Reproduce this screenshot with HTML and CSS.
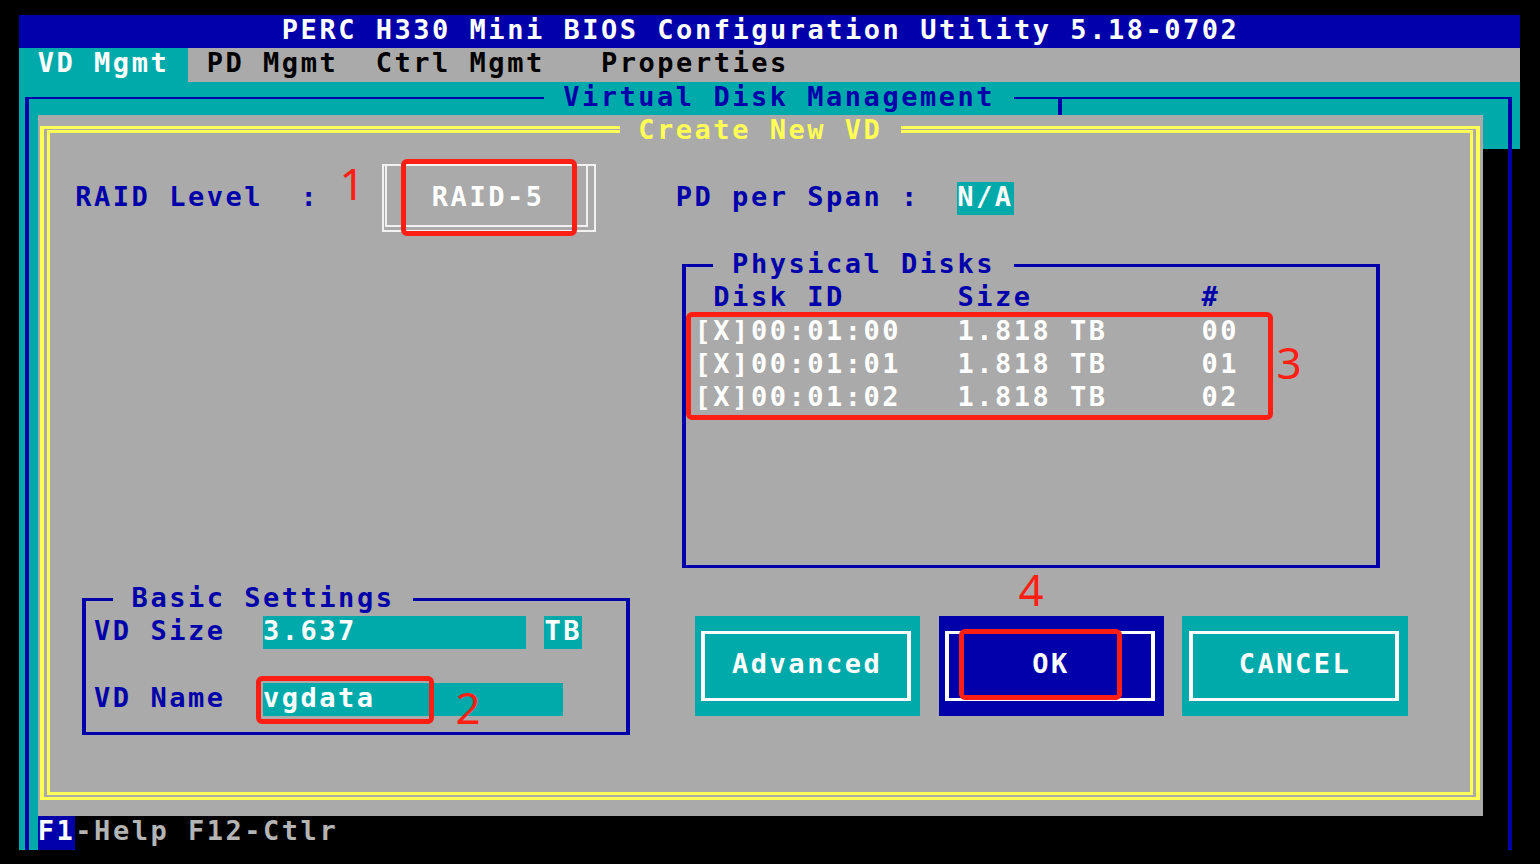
FILE: index.html
```html
<!DOCTYPE html>
<html lang="en">
<head>
<meta charset="utf-8">
<title>PERC H330 Mini BIOS Configuration Utility</title>
<link rel="stylesheet" href="styles.css">
</head>
<body>
<div class="screen">
  <div class="titlebar">PERC H330 Mini BIOS Configuration Utility 5.18-0702</div>
  <div class="menubar"><span class="menu-on"> VD Mgmt </span><span> PD Mgmt  Ctrl Mgmt   Properties</span></div>
  <div class="desk"></div>
  <div class="shadow"></div>
  <div class="statusbar"><span class="key">F1</span><span class="hint">-Help F12-Ctlr</span></div>
  <div class="vdm-frame"></div>
  <div class="vdm-title"> Virtual Disk Management </div>
  <div class="vdm-tee"></div>

  <div class="window">
    <div class="dframe"><div class="dframe-inner"></div></div>
    <div class="win-title"> Create New VD </div>

    <div class="lbl raid-lbl">RAID Level  :</div>
    <div class="sel"><div class="sel-inner"></div></div>
    <div class="val raid-val">RAID-5</div>

    <div class="lbl span-lbl">PD per Span :</div>
    <div class="field na">N/A</div>

    <div class="sbox pd-box"></div>
    <div class="legend pd-legend"> Physical Disks </div>
    <div class="lbl pd-head">Disk ID      Size         #</div>
    <div class="val pd-row r1">[X]00:01:00   1.818 TB     00</div>
    <div class="val pd-row r2">[X]00:01:01   1.818 TB     01</div>
    <div class="val pd-row r3">[X]00:01:02   1.818 TB     02</div>

    <div class="sbox bs-box"></div>
    <div class="legend bs-legend"> Basic Settings </div>
    <div class="lbl size-lbl">VD Size</div>
    <div class="field size-field">3.637</div>
    <div class="field tb-field">TB</div>
    <div class="lbl name-lbl">VD Name</div>
    <div class="field name-field">vgdata</div>

    <div class="btn btn-adv"><div class="btn-frame"></div><div class="btn-label">Advanced</div></div>
    <div class="btn btn-ok"><div class="btn-frame"></div><div class="btn-label">OK</div></div>
    <div class="btn btn-cancel"><div class="btn-frame"></div><div class="btn-label">CANCEL</div></div>
  </div>
</div>

<div class="mark m1"></div>
<div class="mark m2"></div>
<div class="mark m3"></div>
<div class="mark m4"></div>
<div class="num n1">1</div>
<div class="num n2">2</div>
<div class="num n3">3</div>
<div class="num n4">4</div>
</body>
</html>
```
FILE: styles.css
```css
:root {
  --cw: 18.775px;
  --rh: 33.4px;
  --blue: #0000AA;
  --cyan: #00AAAA;
  --gray: #AAAAAA;
  --yellow: #FFFF55;
  --white: #FFFFFF;
  --red: #FF1E14;
}

html, body {
  margin: 0;
  padding: 0;
}

body {
  background: #000;
  width: 1540px;
  height: 864px;
  overflow: hidden;
  position: relative;
}

.screen {
  margin: 15px 0 0 19px;
  display: grid;
  grid-template-columns: repeat(80, var(--cw));
  grid-template-rows: repeat(25, var(--rh));
  font-family: "DejaVu Sans Mono", monospace;
  font-weight: bold;
  font-size: 27px;
  line-height: 30.3px;
  letter-spacing: 2.519px;
  white-space: pre;
}

.titlebar {
  grid-row: 1;
  grid-column: 1 / -1;
  background: var(--blue);
  color: var(--white);
  padding-left: calc(var(--cw) * 14);
}

.menubar {
  grid-row: 2;
  grid-column: 1 / -1;
  background: var(--gray);
  color: #000;
  display: flex;
}

.menu-on {
  background: var(--cyan);
  color: var(--white);
}

.desk {
  grid-row: 3 / 26;
  grid-column: 1 / -1;
  background: var(--cyan);
}

.shadow {
  grid-row: 5 / 25;
  grid-column: 79 / 81;
  background: #000;
}

.statusbar {
  grid-row: 25;
  grid-column: 2 / 81;
  background: #000;
  display: flex;
}

.key {
  background: var(--blue);
  color: var(--white);
}

.hint {
  color: #B4B4B4;
}

.vdm-frame {
  grid-row: 3 / 26;
  grid-column: 1 / -1;
  margin: 15px 8.4px 0 6.3px;
  border: solid var(--blue);
  border-width: 2px 4px 0 4px;
}

.vdm-title {
  grid-row: 3;
  grid-column: 29 / 54;
  background: var(--cyan);
  color: var(--blue);
}

.vdm-tee {
  grid-row: 3;
  grid-column: 56;
  margin: 15px 0 0 6.8px;
  width: 0;
  border-left: 4px solid var(--blue);
}

/* Create New VD window */
.window {
  grid-row: 4 / 25;
  grid-column: 2 / 79;
  background: var(--gray);
  display: grid;
  grid-template-columns: repeat(77, var(--cw));
  grid-template-rows: repeat(21, var(--rh));
  z-index: 2;
}

.dframe {
  grid-area: 1 / 1 / -1 / -1;
  margin: 10.8px 3px 16.6px 2.7px;
  border: solid var(--yellow);
  border-width: 3px 4px;
  padding: 1.5px 3px;
}

.dframe-inner {
  height: 100%;
  box-sizing: border-box;
  border: solid var(--yellow);
  border-width: 3px 3px;
}

.win-title {
  grid-row: 1;
  grid-column: 32 / 47;
  background: var(--gray);
  color: var(--yellow);
}

.lbl {
  color: var(--blue);
}

.val {
  color: var(--white);
}

.field {
  background: var(--cyan);
  color: var(--white);
}

.raid-lbl {
  grid-row: 3;
  grid-column: 3 / 16;
}

.sel {
  grid-row: 2 / 5;
  grid-column: 19 / 31;
  margin: 15.4px 5px 16.5px 6.3px;
  border: 2px solid #F2F2F2;
  padding: 0 5.5px 2.8px 1px;
}

.sel-inner {
  height: 100%;
  box-sizing: border-box;
  border: 2px solid #F2F2F2;
  border-top: 0;
}

.raid-val {
  grid-row: 3;
  grid-column: 22 / 28;
}

.span-lbl {
  grid-row: 3;
  grid-column: 35 / 48;
}

.na {
  grid-row: 3;
  grid-column: 50 / 53;
}

.sbox {
  margin: 15.3px 8.475px 15.1px 6.3px;
  border: solid var(--blue);
  border-width: 3px 4px;
}

.legend {
  background: var(--gray);
  color: var(--blue);
}

.pd-box {
  grid-row: 5 / 15;
  grid-column: 35 / 73;
}

.pd-legend {
  grid-row: 5;
  grid-column: 37 / 53;
}

.pd-head {
  grid-row: 6;
  grid-column: 37 / 72;
}

.pd-row {
  grid-column: 36 / 72;
}

.r1 { grid-row: 7; }
.r2 { grid-row: 8; }
.r3 { grid-row: 9; }

.bs-box {
  grid-row: 15 / 20;
  grid-column: 3 / 33;
}

.bs-legend {
  grid-row: 15;
  grid-column: 5 / 21;
}

.size-lbl {
  grid-row: 16;
  grid-column: 4 / 11;
}

.size-field {
  grid-row: 16;
  grid-column: 13 / 27;
}

.tb-field {
  grid-row: 16;
  grid-column: 28 / 30;
}

.name-lbl {
  grid-row: 18;
  grid-column: 4 / 11;
}

.name-field {
  grid-row: 18;
  grid-column: 13 / 29;
}

/* buttons */
.btn {
  grid-row: 16 / 19;
  display: grid;
  grid-template-rows: repeat(3, var(--rh));
  grid-template-columns: 100%;
  background: var(--cyan);
}

.btn-adv { grid-column: 36 / 48; }
.btn-ok { grid-column: 49 / 61; background: var(--blue); }
.btn-cancel { grid-column: 62 / 74; }

.btn-frame {
  grid-area: 1 / 1 / 4 / 2;
  margin: 15.3px 8.475px 15.1px 6.3px;
  border: solid var(--white);
  border-width: 3px 4px;
}

.btn-label {
  grid-area: 2 / 1 / 3 / 2;
  justify-self: center;
  color: var(--white);
}

/* red annotation overlays */
.mark {
  position: absolute;
  z-index: 10;
  box-sizing: border-box;
  border: 5px solid var(--red);
  border-radius: 6px;
}

.m1 { left: 401px; top: 159px; width: 176px; height: 77px; }
.m2 { left: 256px; top: 676px; width: 178px; height: 48px; }
.m3 { left: 686px; top: 312px; width: 587px; height: 108px; }
.m4 { left: 959px; top: 629px; width: 163px; height: 71px; }

.num {
  position: absolute;
  z-index: 10;
  width: 40px;
  text-align: center;
  font-family: "Noto Sans", sans-serif;
  font-size: 44px;
  line-height: 44px;
  color: var(--red);
}

.n1 { left: 332px; top: 161px; }
.n2 { left: 448px; top: 685px; }
.n3 { left: 1269px; top: 340px; }
.n4 { left: 1011px; top: 567px; }
```
